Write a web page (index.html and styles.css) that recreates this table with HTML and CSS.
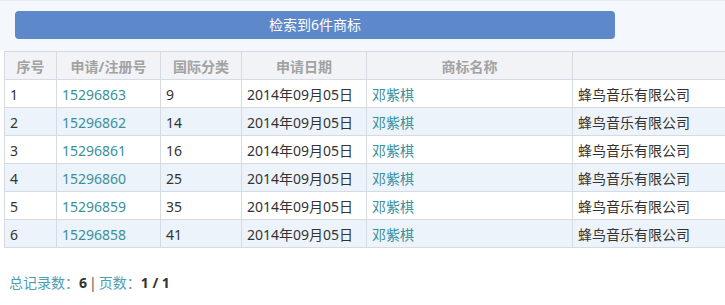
FILE: index.html
```html
<!DOCTYPE html>
<html lang="zh-CN">
<head>
<meta charset="utf-8">
<link rel="stylesheet" href="styles.css">
</head>
<body>
<div class="page">
  <div class="topbar">
    <div class="result-btn">检索到6件商标</div>
  </div>
  <div class="table-wrap">
    <table class="grid">
      <colgroup>
        <col class="c1"><col class="c2"><col class="c3"><col class="c4"><col class="c5"><col class="c6">
      </colgroup>
      <thead>
        <tr><th>序号</th><th>申请/注册号</th><th>国际分类</th><th>申请日期</th><th>商标名称</th><th></th></tr>
      </thead>
      <tbody>
        <tr><td>1</td><td class="link">15296863</td><td>9</td><td>2014年09月05日</td><td class="link">邓紫棋</td><td>蜂鸟音乐有限公司</td></tr>
        <tr class="alt"><td>2</td><td class="link">15296862</td><td>14</td><td>2014年09月05日</td><td class="link">邓紫棋</td><td>蜂鸟音乐有限公司</td></tr>
        <tr><td>3</td><td class="link">15296861</td><td>16</td><td>2014年09月05日</td><td class="link">邓紫棋</td><td>蜂鸟音乐有限公司</td></tr>
        <tr class="alt"><td>4</td><td class="link">15296860</td><td>25</td><td>2014年09月05日</td><td class="link">邓紫棋</td><td>蜂鸟音乐有限公司</td></tr>
        <tr><td>5</td><td class="link">15296859</td><td>35</td><td>2014年09月05日</td><td class="link">邓紫棋</td><td>蜂鸟音乐有限公司</td></tr>
        <tr class="alt"><td>6</td><td class="link">15296858</td><td>41</td><td>2014年09月05日</td><td class="link">邓紫棋</td><td>蜂鸟音乐有限公司</td></tr>
      </tbody>
    </table>
  </div>
  <div class="footer">
    <span class="lbl">总记录数：</span><b>6</b><span class="sep">|</span><span class="lbl">页数：</span><b>1 / 1</b>
  </div>
</div>
</body>
</html>
```
FILE: styles.css
```css
html, body {
  margin: 0;
  padding: 0;
  background: #ffffff;
}
body {
  width: 725px;
  height: 305px;
  overflow: hidden;
  font-family: "Noto Sans", "Noto Sans CJK SC", sans-serif;
  font-size: 14px;
  color: #333333;
}
.page {
  display: flex;
  flex-direction: column;
}
.topbar {
  background: #f4f7fc;
  border-top: 1px solid #e6ebf2;
  padding: 10px 0 12px 15px;
}
.result-btn {
  width: 600px;
  height: 28px;
  line-height: 28px;
  background: #5d88c9;
  border-radius: 4px;
  color: #ffffff;
  text-align: center;
  font-size: 14px;
}
.table-wrap {
  padding-left: 4px;
  background: #ffffff;
}
.grid {
  border-collapse: collapse;
  table-layout: fixed;
  width: 740px;
}
.c1 { width: 52px; }
.c2 { width: 104px; }
.c3 { width: 81px; }
.c4 { width: 125px; }
.c5 { width: 206px; }
.c6 { width: 172px; }
.grid th, .grid td {
  border: 1px solid #d6dbe3;
  height: 26px;
  padding: 1px 5px 0;
  white-space: nowrap;
  overflow: hidden;
}
.grid th {
  background: #f1f3f7;
  color: #a2a2a2;
  font-weight: bold;
  text-align: center;
}
.grid td {
  text-align: left;
  background: #ffffff;
}
.grid tr.alt td {
  background: #edf3fa;
}
.grid td.link {
  color: #3a909c;
}
.footer {
  margin-top: 25px;
  padding-left: 9px;
  font-size: 14px;
  line-height: 20px;
  color: #333333;
}
.footer .lbl {
  color: #4b9db3;
}
.footer b {
  font-weight: bold;
  color: #333333;
}
.footer .sep {
  margin: 0 2px;
  color: #555555;
}
```
